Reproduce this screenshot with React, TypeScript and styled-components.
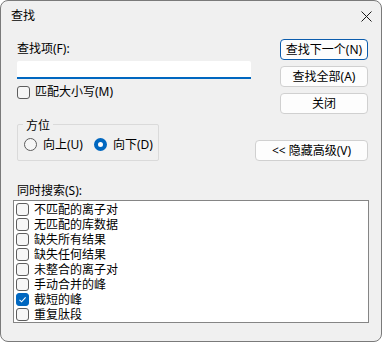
import styled, { createGlobalStyle } from "styled-components";

const GlobalStyle = createGlobalStyle`
  html, body {
    margin: 0;
    padding: 0;
    background: #ffffff;
  }
  body {
    font-family: "Noto Sans", "Noto Sans CJK SC", sans-serif;
    font-size: 12px;
    color: #000000;
  }
`;

const Window = styled.div`
  box-sizing: border-box;
  width: 382px;
  height: 342px;
  border: 1px solid #7a7a7a;
  border-radius: 8px;
  background: #f0f0f0;
  overflow: hidden;
  display: flex;
  flex-direction: column;
`;

const TitleBar = styled.div`
  height: 30px;
  display: flex;
  align-items: center;
  justify-content: space-between;
  padding: 0 9px 0 10px;
  font-size: 12px;
  line-height: 14px;
`;

const CloseButton = styled.div`
  width: 11px;
  height: 11px;
  display: flex;
  margin-top: 1px;
`;

const Body = styled.div`
  padding: 8px 13px 0 16px;
  display: flex;
  flex-direction: column;
`;

const TopRow = styled.div`
  display: flex;
  justify-content: space-between;
`;

const LeftCol = styled.div`
  width: 234px;
  display: flex;
  flex-direction: column;
  padding-top: 2px;
`;

const Label = styled.div`
  line-height: 16px;
  height: 16px;
  white-space: nowrap;
`;

const TextInput = styled.div`
  box-sizing: border-box;
  margin-top: 4px;
  height: 18px;
  background: #ffffff;
  border-bottom: 2px solid #0067c0;
  border-radius: 2px 2px 0 0;
`;

const CheckRow = styled.div<{ $top?: number }>`
  display: flex;
  align-items: center;
  gap: 5px;
  height: 14px;
  margin-top: ${(p) => p.$top ?? 0}px;
  line-height: 14px;
  white-space: nowrap;
`;

const Box = styled.div<{ $checked?: boolean }>`
  box-sizing: border-box;
  width: 13px;
  height: 13px;
  flex: none;
  border-radius: 3px;
  border: 1px solid ${(p) => (p.$checked ? "#0067c0" : "#5d5d5d")};
  background: ${(p) => (p.$checked ? "#0067c0" : "#f6f6f6")};
  display: flex;
  align-items: center;
  justify-content: center;
`;

const GroupBox = styled.div`
  box-sizing: border-box;
  margin-top: 25px;
  width: 142px;
  height: 37px;
  border: 1px solid #dadada;
  border-radius: 2px;
`;

const Legend = styled.div`
  width: fit-content;
  margin: -6px 0 0 5px;
  padding: 0 3px;
  background: #f0f0f0;
  line-height: 14px;
  height: 14px;
`;

const RadioRow = styled.div`
  display: flex;
  align-items: center;
  margin-top: 5px;
  padding-left: 6px;
  height: 13px;
`;

const RadioItem = styled.div`
  display: flex;
  align-items: center;
  gap: 6px;
  margin-right: 11px;
  line-height: 14px;
  white-space: nowrap;
`;

const Radio = styled.div<{ $checked?: boolean }>`
  box-sizing: border-box;
  width: 13px;
  height: 13px;
  flex: none;
  border-radius: 50%;
  border: ${(p) => (p.$checked ? "4px solid #0067c0" : "1px solid #5d5d5d")};
  background: ${(p) => (p.$checked ? "#ffffff" : "#f6f6f6")};
`;

const RightCol = styled.div`
  display: flex;
  flex-direction: column;
  align-items: flex-end;
  gap: 6px;
`;

const Button = styled.div<{ $width?: number; $focused?: boolean; $top?: number }>`
  box-sizing: border-box;
  width: ${(p) => p.$width ?? 88}px;
  height: 21px;
  margin-top: ${(p) => p.$top ?? 0}px;
  background: #fdfdfd;
  border: 1px solid ${(p) => (p.$focused ? "#0b5cad" : "#d0d0d0")};
  box-shadow: ${(p) => (p.$focused ? "inset 0 0 0 1px #ffffff" : "none")};
  border-radius: 4px;
  display: flex;
  align-items: center;
  justify-content: center;
  line-height: 14px;
  white-space: nowrap;
`;

const SearchLabel = styled(Label)`
  margin-top: 22px;
`;

const ListBox = styled.div`
  box-sizing: border-box;
  margin: 1px 0 0 -4px;
  width: 356px;
  height: 123px;
  background: #ffffff;
  border: 1px solid #858585;
  padding: 1px 2px;
  display: flex;
  flex-direction: column;
`;

const ListItem = styled.div`
  display: flex;
  align-items: center;
  gap: 5px;
  height: 15.15px;
  white-space: nowrap;
`;

const ItemText = styled.span`
  display: block;
  height: 15px;
  line-height: 15px;
  overflow: hidden;
`;

const CheckMark = () => (
  <svg width="9" height="9" viewBox="0 0 9 9">
    <path d="M1.5 4.8 L3.6 6.8 L7.6 2.4" fill="none" stroke="#ffffff" strokeWidth="1.1" />
  </svg>
);

const CloseIcon = () => (
  <svg width="11" height="11" viewBox="0 0 11 11">
    <path d="M0.5 0.5 L10.5 10.5 M10.5 0.5 L0.5 10.5" stroke="#1a1a1a" strokeWidth="1" />
  </svg>
);

const items = [
  { text: "不匹配的离子对", checked: false },
  { text: "无匹配的库数据", checked: false },
  { text: "缺失所有结果", checked: false },
  { text: "缺失任何结果", checked: false },
  { text: "未整合的离子对", checked: false },
  { text: "手动合并的峰", checked: false },
  { text: "截短的峰", checked: true },
  { text: "重复肽段", checked: false },
];

export default function App() {
  return (
    <>
      <GlobalStyle />
      <Window>
        <TitleBar>
          <span>查找</span>
          <CloseButton>
            <CloseIcon />
          </CloseButton>
        </TitleBar>
        <Body>
          <TopRow>
            <LeftCol>
              <Label>查找项(F):</Label>
              <TextInput />
              <CheckRow $top={6}>
                <Box />
                <span>匹配大小写(M)</span>
              </CheckRow>
              <GroupBox>
                <Legend>方位</Legend>
                <RadioRow>
                  <RadioItem>
                    <Radio />
                    <span>向上(U)</span>
                  </RadioItem>
                  <RadioItem>
                    <Radio $checked />
                    <span>向下(D)</span>
                  </RadioItem>
                </RadioRow>
              </GroupBox>
            </LeftCol>
            <RightCol>
              <Button $focused>查找下一个(N)</Button>
              <Button>查找全部(A)</Button>
              <Button>关闭</Button>
              <Button $width={113} $top={20}>
                &lt;&lt; 隐藏高级(V)
              </Button>
            </RightCol>
          </TopRow>
          <SearchLabel>同时搜索(S):</SearchLabel>
          <ListBox>
            {items.map((item) => (
              <ListItem key={item.text}>
                <Box $checked={item.checked}>{item.checked && <CheckMark />}</Box>
                <ItemText>{item.text}</ItemText>
              </ListItem>
            ))}
          </ListBox>
        </Body>
      </Window>
    </>
  );
}
